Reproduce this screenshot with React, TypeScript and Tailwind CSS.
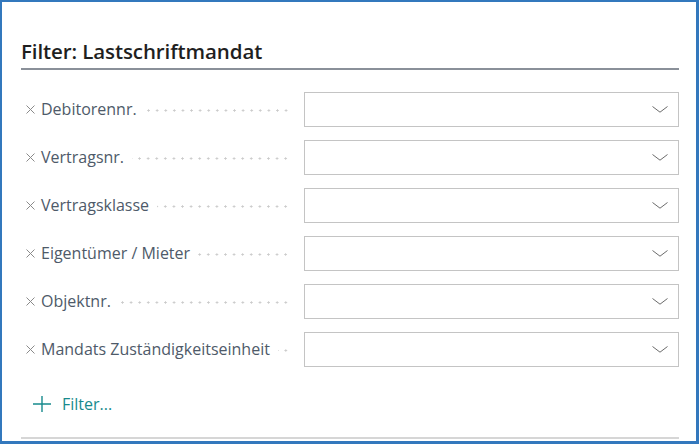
import React from 'react';

const fields = [
  'Debitorennr.',
  'Vertragsnr.',
  'Vertragsklasse',
  'Eigentümer / Mieter',
  'Objektnr.',
  'Mandats Zuständigkeitseinheit',
];

function Chevron() {
  return (
    <svg width="16" height="7" viewBox="0 0 16 7" fill="none" className="shrink-0">
      <polyline points="0.5,0.5 8,6.2 15.5,0.5" stroke="#6b6b6b" strokeWidth="1" />
    </svg>
  );
}

function Cross() {
  return (
    <svg width="9" height="9" viewBox="0 0 9 9" className="shrink-0">
      <path d="M0.5 0.5 L8.5 8.5 M8.5 0.5 L0.5 8.5" stroke="#8a8a8a" strokeWidth="1" />
    </svg>
  );
}

function FilterRow({ label }: { label: string }) {
  return (
    <div className="flex items-center h-[35px]">
      <div className="w-[283px] flex items-center pl-[5px] h-full">
        <Cross />
        <span className="ml-[6px] text-[16px] text-[#4e5a69] whitespace-nowrap leading-none -translate-y-[1px]">{label}</span>
        <div className="flex-1 h-full ml-[8px] mr-[14px] bg-[radial-gradient(circle_at_center,#cacaca_0.9px,transparent_1.3px)] bg-[length:8.6px_100%] bg-right bg-repeat-x translate-y-[1px]" />
      </div>
      <div className="flex-1 h-full border border-[#c4c4c4] flex items-center justify-end pr-[10px] bg-white">
        <Chevron />
      </div>
    </div>
  );
}

export default function App() {
  return (
    <div
      className="w-[699px] h-[444px] bg-white border-l-2 border-t-2 border-r-[3px] border-b-[3px] border-[#3378bd] flex flex-col pl-[19px] pr-[17px]"
      style={{ fontFamily: '"Open Sans", "Noto Sans", sans-serif' }}
    >
      <h1 className="mt-[35px] text-[20.5px] font-semibold leading-[28px] text-[#1f1f1f] tracking-[-0.1px]">
        Filter: Lastschriftmandat
      </h1>
      <div className="mt-[3px] h-[2px] bg-[#8a9099]" />
      <div className="mt-[22px] flex flex-col gap-[13px]">
        {fields.map((f) => (
          <FilterRow key={f} label={f} />
        ))}
      </div>
      <button className="mt-[25px] self-start flex items-center gap-[10px] pl-[11px] text-[16px] text-[#178a8d]">
        <svg width="20" height="18" viewBox="0 0 20 18" fill="none">
          <path d="M10 1 V17 M1 9 H19" stroke="#178a8d" strokeWidth="1.4" />
        </svg>
        <span>Filter...</span>
      </button>
      <div className="mt-auto mb-[2px] h-[2px] bg-[#d6d6d6]" />
    </div>
  );
}
